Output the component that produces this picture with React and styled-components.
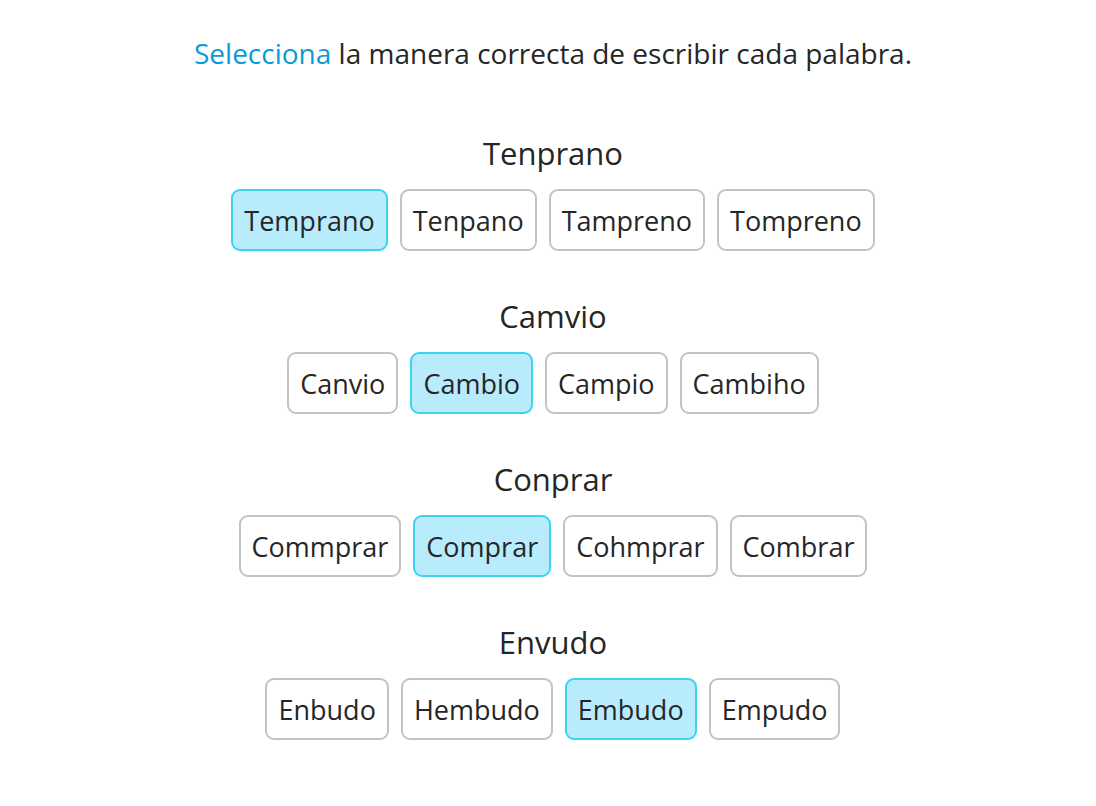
import styled, { createGlobalStyle } from 'styled-components';
import { useState } from 'react';

const GlobalStyle = createGlobalStyle`
    body {
        margin: 0;
        background: #FFFFFF;
        font-family: 'Open Sans', 'Noto Sans', sans-serif;
        color: #262626;
    }
`;

const QUESTIONS = [
    { word: 'Tenprano', options: ['Temprano', 'Tenpano', 'Tampreno', 'Tompreno'], answer: 0 },
    { word: 'Camvio', options: ['Canvio', 'Cambio', 'Campio', 'Cambiho'], answer: 1 },
    { word: 'Conprar', options: ['Commprar', 'Comprar', 'Cohmprar', 'Combrar'], answer: 1 },
    { word: 'Envudo', options: ['Enbudo', 'Hembudo', 'Embudo', 'Empudo'], answer: 2 },
];

const Question = ({ word, options, initial }) => {
    const [selected, setSelected] = useState(initial);

    return (
        <Group>
            <Heading>{word}</Heading>
            <OptionRow>
                {options.map((opt, i) => (
                    <OptionButton
                        key={opt}
                        $active={selected === i}
                        onClick={() => setSelected(i)}>
                        {opt}
                    </OptionButton>
                ))}
            </OptionRow>
        </Group>
    );
}

export default function App() {
    return (
        <Page>
            <GlobalStyle />
            <Intro><Highlight>Selecciona</Highlight> la manera correcta de escribir cada palabra.</Intro>
            <List>
                {QUESTIONS.map(q => (
                    <Question key={q.word} word={q.word} options={q.options} initial={q.answer} />
                ))}
            </List>
        </Page>
    );
}

const Page = styled.main`
display: flex;
flex-direction: column;
align-items: center;
padding-top: 34px;
padding-left: 10px;
`;

const Intro = styled.p`
margin: 0;
font-size: 28px;
line-height: 38px;
color: #262626;
`;

const Highlight = styled.span`
color: #0a9ad8;
`;

const List = styled.div`
display: flex;
flex-direction: column;
gap: 45px;
margin-top: 61px;
`;

const Group = styled.section`
display: flex;
flex-direction: column;
align-items: center;
`;

const Heading = styled.h2`
margin: 0 0 16px;
font-size: 31px;
font-weight: 400;
line-height: 40px;
color: #262626;
`;

const OptionRow = styled.div`
display: flex;
justify-content: center;
gap: 12px;
`;

const OptionButton = styled.button`
height: 62px;
padding: 0 11px;
box-sizing: border-box;

border-radius: 9px;
border: 2px solid ${props => props.$active ? '#3ad3f3' : '#c3c3c3'};
background: ${props => props.$active ? '#b8ecfd' : '#FFFFFF'};

font-family: inherit;
font-size: 27px;
color: #262626;
cursor: pointer;
outline: none;
`;
